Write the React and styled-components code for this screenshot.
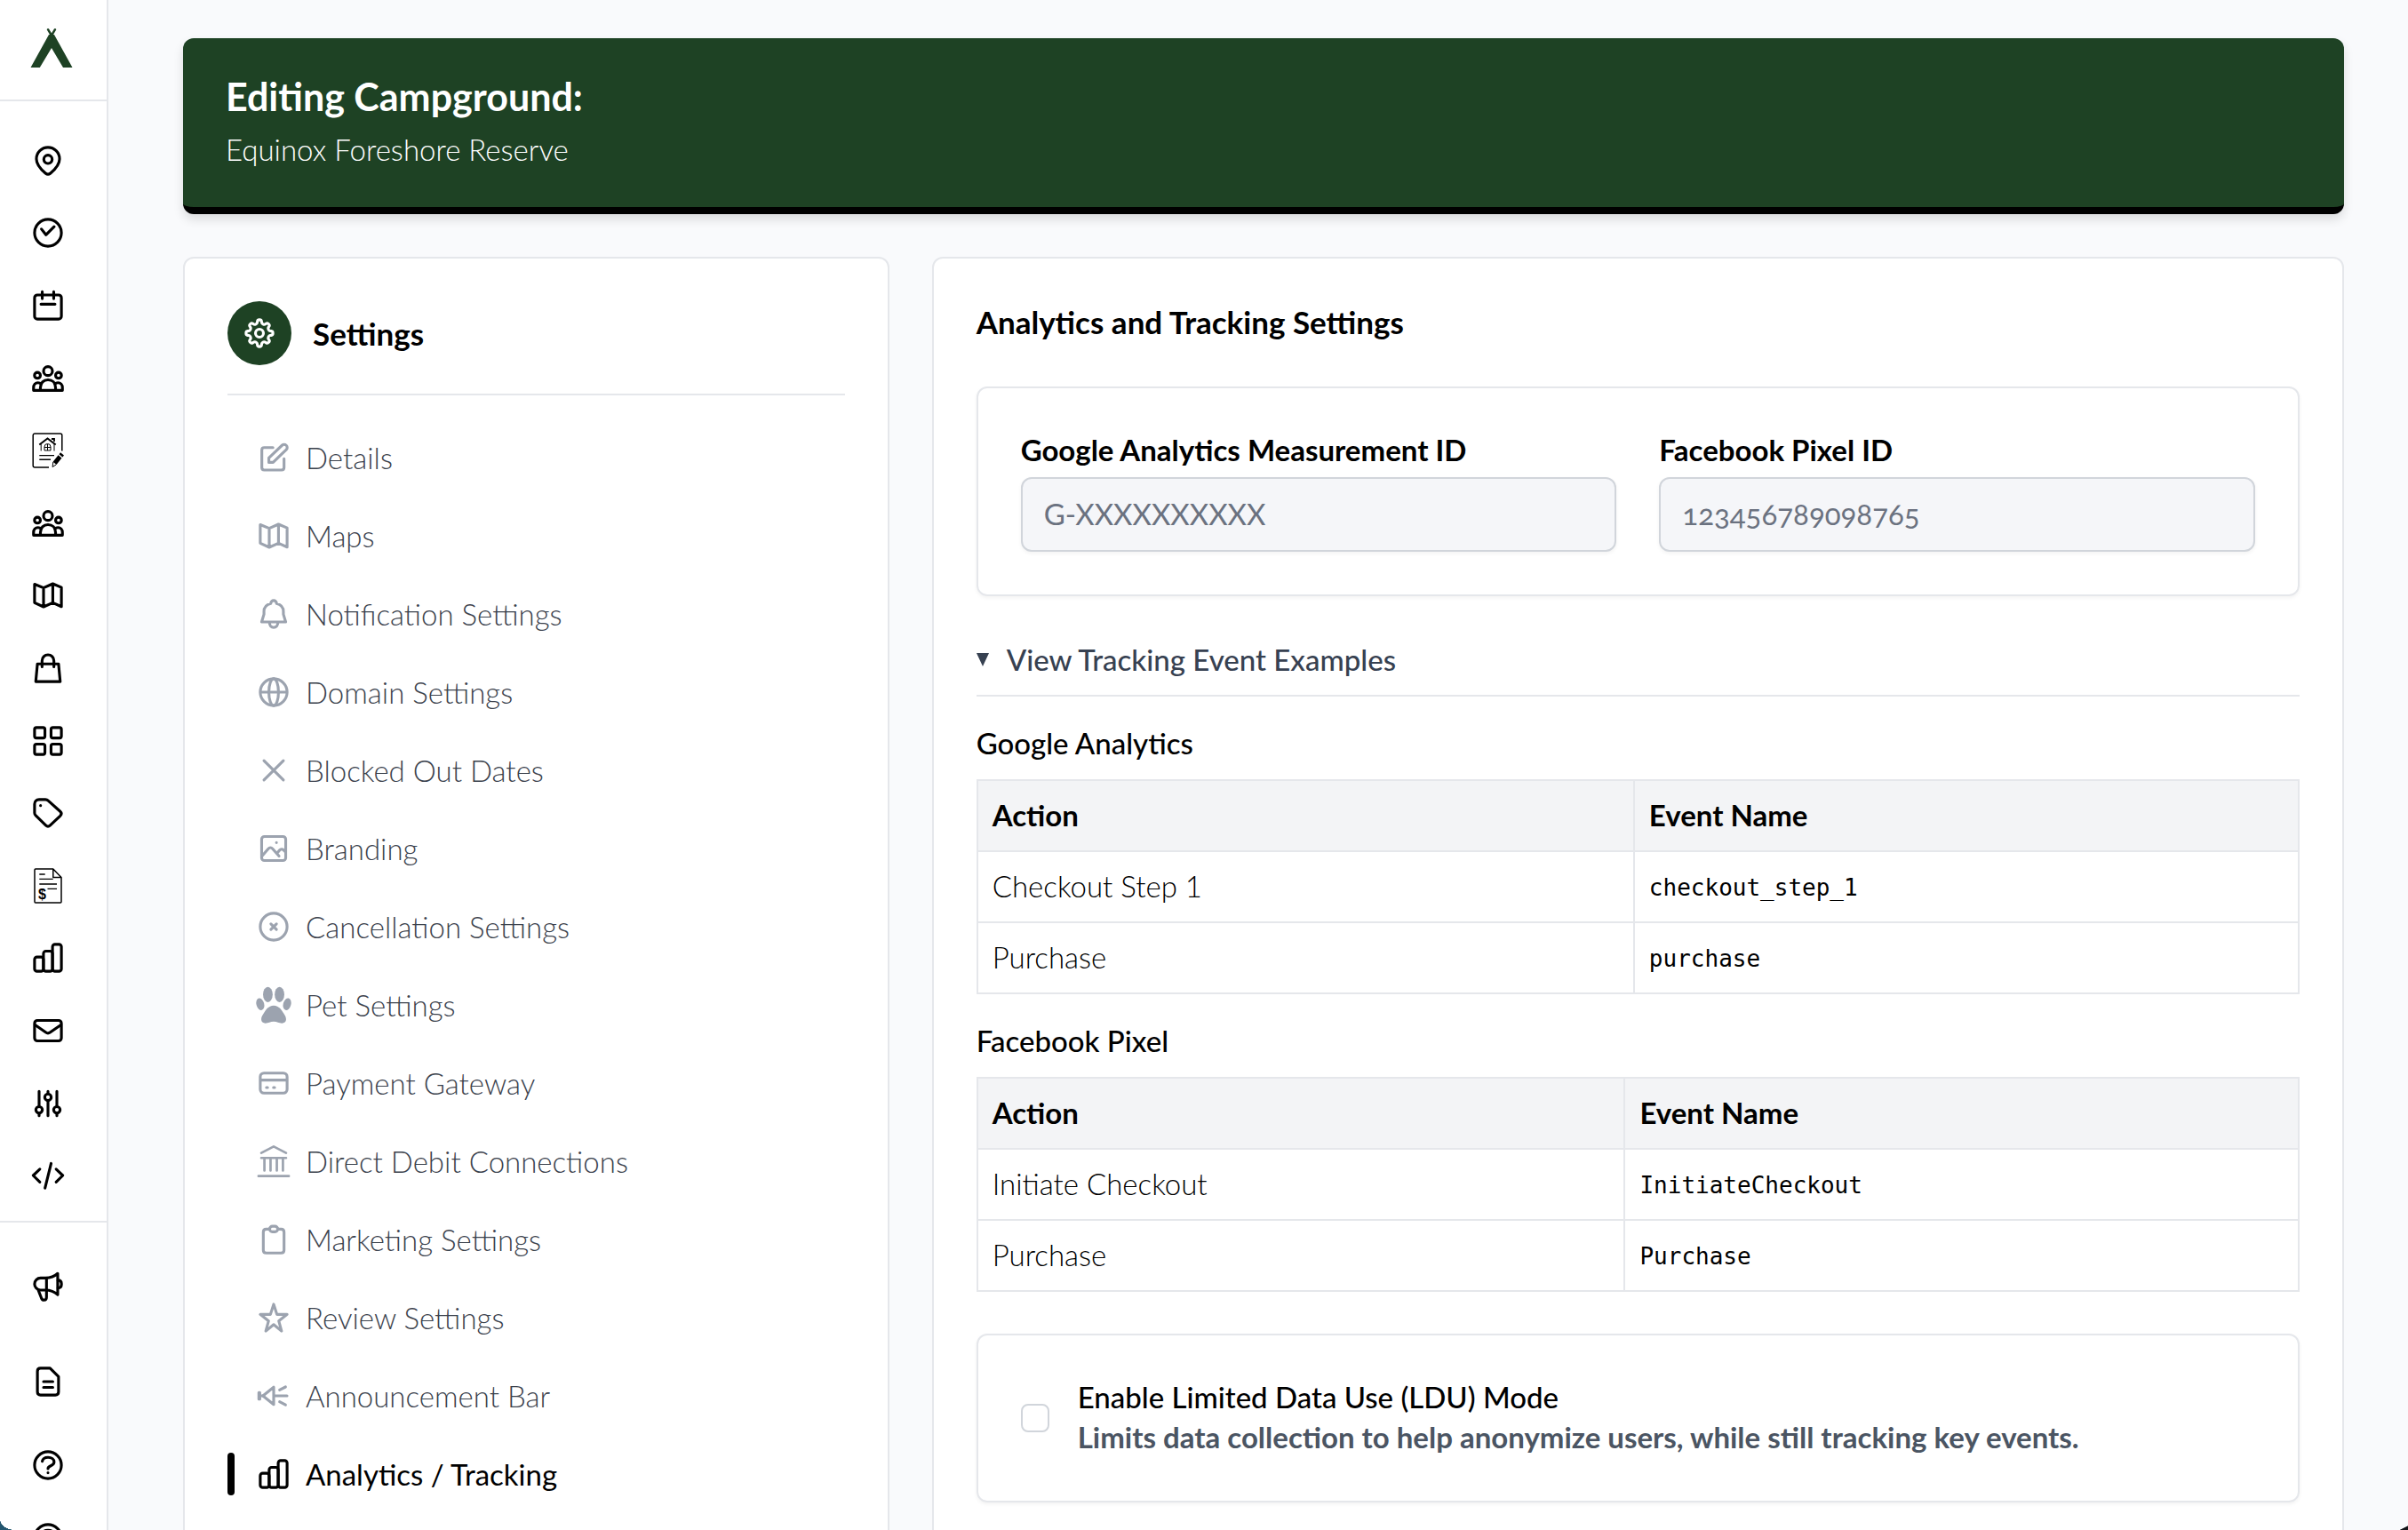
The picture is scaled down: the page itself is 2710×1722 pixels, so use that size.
import styled, { createGlobalStyle } from "styled-components";

// every icon is drawn on the same 24 unit grid with a 1.5 stroke
const icons = {
  pin: (
    <>
      <path d="M18.25 11c0 3-2.9 6-4.9 7.7-.8.7-1.9.7-2.7 0C8.65 17 5.75 14 5.75 11a6.25 6.25 0 0112.5 0z" />
      <circle cx="12" cy="11.2" r="2.25" />
    </>
  ),
  check: (
    <>
      <circle cx="12" cy="12" r="7.25" />
      <path d="M8.5 10l2.4 3.1 4.4-4.4" />
    </>
  ),
  calendar: (
    <>
      <rect x="4.75" y="6.25" width="14.5" height="13" rx="1.5" />
      <path d="M8.9 4.5v3.7M15.1 4.5v3.7M8.2 11.2h7.6" />
    </>
  ),
  people: (
    <>
      <circle cx="12" cy="8" r="2.4" />
      <circle cx="6.3" cy="10.3" r="1.6" />
      <circle cx="17.7" cy="10.3" r="1.6" />
      <path d="M7.9 18.4V17c0-2.6 1.7-4.3 4.1-4.3s4.1 1.7 4.1 4.3v1.4z" />
      <path d="M7.9 18.4H4.2V17c0-1.6 1-2.7 2.4-2.7.7 0 1.3.2 1.7.6M16.1 18.4h3.7V17c0-1.6-1-2.7-2.4-2.7-.7 0-1.3.2-1.7.6" />
    </>
  ),
  map: (
    <path d="M4.75 6L9.6 8l5-2.25 4.65 2V18.1L14.6 16l-5 2.25L4.75 16zM9.6 8v10M14.6 6v10" />
  ),
  bag: (
    <>
      <path d="M6.3 9.7h11.4l.9 9.55H5.4z" />
      <path d="M8.8 11.3V8a3.2 3.2 0 016.4 0v3.3" />
    </>
  ),
  grid: (
    <>
      <rect x="4.75" y="4.75" width="5.6" height="5.6" rx="1" />
      <rect x="13.65" y="4.75" width="5.6" height="5.6" rx="1" />
      <rect x="4.75" y="13.65" width="5.6" height="5.6" rx="1" />
      <rect x="13.65" y="13.65" width="5.6" height="5.6" rx="1" />
    </>
  ),
  tag: (
    <>
      <path d="M4.75 7.2c0-1.5 1-2.45 2.45-2.45h3.4c.6 0 1.1.2 1.5.6l6.5 5.8c.8.7.8 1.5.1 2.3l-5.5 5.2c-.8.8-1.6.8-2.4 0l-5.4-5.3c-.4-.4-.65-.9-.65-1.4z" />
      <path d="M8 8v.01" />
    </>
  ),
  chart: (
    <>
      <rect x="4.75" y="11.6" width="4.8" height="7.65" rx="1.3" />
      <rect x="9.55" y="8.4" width="4.9" height="10.85" rx="1.3" />
      <rect x="14.45" y="4.75" width="4.8" height="14.5" rx="1.3" />
    </>
  ),
  mail: (
    <>
      <rect x="4.75" y="6.5" width="14.5" height="11" rx="1.5" />
      <path d="M5 8.9l5.9 4.1c.7.5 1.5.5 2.2 0L19 8.9" />
    </>
  ),
  sliders: (
    <>
      <path d="M7.2 5.4v8.2M7.2 17.3v1.3M12 5.4v1.3M12 10.5v8.1M16.8 5.4v8.2M16.8 17.3v1.3" />
      <circle cx="7.2" cy="15.4" r="1.75" />
      <circle cx="12" cy="8.6" r="1.75" />
      <circle cx="16.8" cy="15.4" r="1.75" />
    </>
  ),
  code: <path d="M7.6 8.6L4 12l3.6 3.5M16.4 8.6L20 12l-3.6 3.5M13.7 5.5l-3.3 13.3" />,
  megaphone: (
    <>
      <path d="M17.25 4.9C15.6 6.5 13.2 7.4 10.6 7.4H8a3.25 3.25 0 000 6.5h2.6c2.6 0 5 .9 6.65 2.5z" />
      <path d="M11.2 7.5v10.3c0 .9-.5 1.5-1.3 1.5s-1.3-.5-1.5-1.2l-1.6-4.1" />
      <path d="M17.4 8.6c1.2 0 1.9.9 1.9 2.1s-.7 2.1-1.9 2.1" />
    </>
  ),
  doc: (
    <path d="M8 19.25h8c1 0 1.7-.7 1.7-1.7V9.3l-4.6-4.55H8c-1 0-1.7.7-1.7 1.7v11.1c0 1 .7 1.7 1.7 1.7zM9.6 12h5M9.6 15.1h5" />
  ),
  help: (
    <>
      <circle cx="12" cy="12" r="7.25" />
      <path d="M8.9 9.9c.3-1.4 1.5-2.1 3.1-2.1 2 0 3.3 1 3.3 2.5 0 2.4-3.3 1.7-3.3 3.6M12 16.1v.01" />
    </>
  ),
  edit: (
    <>
      <path d="M11.6 6.6H6.9c-.8 0-1.3.5-1.3 1.3v9.5c0 .8.5 1.3 1.3 1.3h9.4c.8 0 1.3-.5 1.3-1.3v-4.8" />
      <path d="M9.4 14.6v-2.4l7.1-6.8a1.65 1.65 0 012.3 0 1.6 1.6 0 010 2.3l-7.1 6.9z" />
    </>
  ),
  bell: (
    <>
      <path d="M17.25 12.2v-1.4c0-2.3-1.5-3.9-3.7-4.4 0-1-.7-1.65-1.55-1.65s-1.55.65-1.55 1.65c-2.2.5-3.7 2.1-3.7 4.4v1.4L5.5 16.3h13z" />
      <path d="M9.75 16.7c0 1.5.9 2.6 2.25 2.6s2.25-1.1 2.25-2.6" />
    </>
  ),
  globe: (
    <>
      <circle cx="12" cy="12" r="7.25" />
      <ellipse cx="12" cy="12" rx="2.6" ry="7.25" />
      <path d="M5 12h14" />
    </>
  ),
  cross: <path d="M17.25 6.75l-10.5 10.5M6.75 6.75l10.5 10.5" />,
  image: (
    <>
      <rect x="5.5" y="5.5" width="13" height="13" rx="1.5" />
      <path d="M5.7 16.1l3.4-4c.7-.8 1.6-.8 2.3 0l3.5 4M13.7 14.6l1.5-1.7c.6-.7 1.5-.7 2.1-.1l1.1 1.1M13.5 8.8v.01" />
    </>
  ),
  cancel: (
    <>
      <circle cx="12" cy="12" r="7.25" />
      <path d="M13.5 10.5l-3 3M10.5 10.5l3 3" />
    </>
  ),
  paw: (
    <g fill="currentColor" stroke="none">
      <ellipse cx="8.85" cy="6.4" rx="2.6" ry="4.1" />
      <ellipse cx="15.15" cy="6.4" rx="2.6" ry="4.1" />
      <ellipse cx="4.75" cy="11.6" rx="2.1" ry="3.3" transform="rotate(-15 4.75 11.6)" />
      <ellipse cx="19.25" cy="11.6" rx="2.1" ry="3.3" transform="rotate(15 19.25 11.6)" />
      <path d="M12 12.3c2.9 0 4.4 2.6 5.4 4.2.9 1.3 1.3 2.2 1.3 3.3 0 1.4-1 2.1-2.3 2.1-1.5 0-2.6-.9-4.4-.9s-2.9.9-4.4.9c-1.3 0-2.3-.7-2.3-2.1 0-1.1.4-2 1.3-3.3 1-1.6 2.5-4.2 5.4-4.2z" />
    </g>
  ),
  card: (
    <>
      <rect x="4.75" y="6.6" width="14.5" height="10.8" rx="2" />
      <path d="M5 10.4h14M8.1 14.4h.6M11.9 14.4h.6" />
    </>
  ),
  bank: (
    <path
      strokeWidth="1.3"
      d="M5.3 7.5L12 4l6.7 3.5M5.3 10.2h13.4M7 10.3V17M10.3 10.3V17M13.7 10.3V17M17 10.3V17M3.8 20h16.4"
    />
  ),
  clipboard: (
    <>
      <path d="M9.8 6.4H8c-1 0-1.6.6-1.6 1.6v9.7c0 1 .6 1.6 1.6 1.6h8c1 0 1.6-.6 1.6-1.6V8c0-1-.6-1.6-1.6-1.6h-1.8" />
      <rect x="9.8" y="4.85" width="4.4" height="3" rx="1.5" />
    </>
  ),
  star: (
    <path d="M12 4.75L13.75 10.25H19.25L14.75 13.75L16.25 19.25L12 15.75L7.75 19.25L9.25 13.75L4.75 10.25H10.25L12 4.75Z" />
  ),
  horn: (
    <>
      <path d="M12 7.3v9.4L6.2 12zM12 12h7.2M15.2 8.8l3.2-1.6M15.2 15.2l3.2 1.7" />
      <path fill="currentColor" d="M4 10.2h.5v3.6H4zM4 12h2" />
    </>
  ),
  cog: (
    <>
      <path d="M13.119 5.613C13.051 5.119 12.628 4.75 12.129 4.75H11.872C11.372 4.75 10.949 5.119 10.881 5.613L10.794 6.245C10.738 6.648 10.44 6.969 10.062 7.119L9.895 7.189C9.522 7.352 9.084 7.338 8.759 7.094L8.451 6.864C8.053 6.565 7.496 6.605 7.144 6.956L6.956 7.144C6.605 7.496 6.565 8.053 6.864 8.451L7.094 8.759C7.338 9.084 7.352 9.522 7.189 9.895L7.119 10.062C6.969 10.44 6.648 10.738 6.245 10.794L5.613 10.881C5.119 10.949 4.75 11.372 4.75 11.872V12.129C4.75 12.628 5.119 13.051 5.613 13.119L6.245 13.206C6.648 13.262 6.969 13.56 7.119 13.938L7.189 14.105C7.352 14.478 7.338 14.916 7.094 15.241L6.864 15.549C6.565 15.947 6.605 16.504 6.956 16.856L7.144 17.044C7.496 17.396 8.053 17.435 8.451 17.137L8.759 16.906C9.084 16.662 9.522 16.648 9.895 16.811L10.062 16.881C10.44 17.031 10.738 17.352 10.794 17.755L10.881 18.387C10.949 18.881 11.372 19.25 11.872 19.25H12.129C12.628 19.25 13.051 18.881 13.119 18.387L13.206 17.755C13.262 17.352 13.56 17.031 13.938 16.881L14.105 16.811C14.478 16.648 14.916 16.662 15.241 16.906L15.549 17.137C15.947 17.435 16.504 17.396 16.856 17.044L17.044 16.856C17.396 16.504 17.435 15.947 17.137 15.549L16.906 15.241C16.662 14.916 16.648 14.478 16.811 14.105L16.881 13.938C17.031 13.56 17.352 13.262 17.755 13.206L18.387 13.119C18.881 13.051 19.25 12.628 19.25 12.129V11.872C19.25 11.372 18.881 10.949 18.387 10.881L17.755 10.794C17.352 10.738 17.031 10.44 16.881 10.062L16.811 9.895C16.648 9.522 16.662 9.084 16.906 8.759L17.137 8.451C17.435 8.053 17.396 7.496 17.044 7.144L16.856 6.956C16.504 6.605 15.947 6.565 15.549 6.864L15.241 7.094C14.916 7.338 14.478 7.352 14.105 7.189L13.938 7.119C13.56 6.969 13.262 6.648 13.206 6.245Z" />
      <circle cx="12" cy="12" r="2.15" />
    </>
  ),
};

const Icon = ({ name }) => (
  <StyledIcon viewBox="0 0 24 24" aria-hidden="true">
    {icons[name]}
  </StyledIcon>
);

const TentLogo = () => (
  <svg width="48" height="46" viewBox="0 0 48 46" aria-hidden="true">
    <path fill="#1e4224" d="M.5 45L21 8h6l20.5 37H37L24 23 10.8 45z" />
    <path stroke="#1e4224" strokeWidth="2.5" strokeLinecap="round" d="M20 2.2l5 8.3M28 2.2l-5 8.3" />
  </svg>
);

const ContractIcon = () => (
  <svg width="36" height="40" viewBox="0 0 36 40" fill="none" stroke="currentColor" aria-hidden="true">
    <path strokeWidth="1.5" d="M33.8 20.5V3a2 2 0 00-2-2H3.2a2 2 0 00-2 2v34a2 2 0 002 2H19" />
    <path strokeWidth="2" d="M8.3 13.5l9.2-7 9.2 7" />
    <path strokeWidth="1" d="M10.2 13v7.5M25 13v7.5" />
    <path strokeWidth="1.8" d="M22 7h3v3" />
    <path strokeWidth="1" d="M14 20v-4a3.5 3.5 0 017 0v4zM17.5 13v7M14 16.5h7" />
    <path strokeWidth="1.4" d="M8.3 25.6H25M8.3 30.3H21" />
    <path fill="currentColor" stroke="none" d="M30.5 24.2l1.6-1.9 3.9 3.2-1.6 1.9zM29.6 25.2l3.9 3.2-6 7.5-3.9-3.2z" />
    <path strokeWidth="1" d="M23.8 33l-.7 5.5 4-2.5" />
  </svg>
);

const InvoiceIcon = () => (
  <svg width="32" height="40" viewBox="0 0 32 40" fill="none" stroke="currentColor" aria-hidden="true">
    <path strokeWidth="1.5" strokeLinejoin="round" d="M21.8 1H2a1 1 0 00-1 1v36a1 1 0 001 1h28a1 1 0 001-1V10.5zM21.8 1v9.5H31" />
    <path strokeWidth="1.3" d="M6.3 7h6.4M6.3 12.4h15.4M6.3 18H26M15.5 23.4H26" />
    <text x="5" y="35" fill="currentColor" stroke="none" fontFamily="Liberation Sans, sans-serif" fontSize="16" fontWeight="700">
      $
    </text>
  </svg>
);

const mainLinks = [
  { title: "Campgrounds", icon: "pin" },
  { title: "Check in", icon: "check" },
  { title: "Calendar", icon: "calendar" },
  { title: "Guests", icon: "people" },
  { title: "Contracts", custom: ContractIcon },
  { title: "Staff", icon: "people" },
  { title: "Site map", icon: "map" },
  { title: "Store", icon: "bag" },
  { title: "Extras", icon: "grid" },
  { title: "Discounts", icon: "tag" },
  { title: "Invoices", custom: InvoiceIcon },
  { title: "Reports", icon: "chart" },
  { title: "Messages", icon: "mail" },
  { title: "Controls", icon: "sliders" },
  { title: "Embed", icon: "code" },
];

const menu = [
  { title: "Details", icon: "edit" },
  { title: "Maps", icon: "map" },
  { title: "Notification Settings", icon: "bell" },
  { title: "Domain Settings", icon: "globe" },
  { title: "Blocked Out Dates", icon: "cross" },
  { title: "Branding", icon: "image" },
  { title: "Cancellation Settings", icon: "cancel" },
  { title: "Pet Settings", icon: "paw" },
  { title: "Payment Gateway", icon: "card" },
  { title: "Direct Debit Connections", icon: "bank" },
  { title: "Marketing Settings", icon: "clipboard" },
  { title: "Review Settings", icon: "star" },
  { title: "Announcement Bar", icon: "horn" },
  { title: "Analytics / Tracking", icon: "chart", active: true },
];

const googleEvents = [
  ["Checkout Step 1", "checkout_step_1"],
  ["Purchase", "purchase"],
];

const facebookEvents = [
  ["Initiate Checkout", "InitiateCheckout"],
  ["Purchase", "Purchase"],
];

const Events = ({ title, rows, split }) => (
  <>
    <TableTitle>{title}</TableTitle>
    <EventTable $split={split}>
      <thead>
        <tr>
          <th>Action</th>
          <th>Event Name</th>
        </tr>
      </thead>
      <tbody>
        {rows.map(([action, name]) => (
          <tr key={name}>
            <td>{action}</td>
            <td>
              <code>{name}</code>
            </td>
          </tr>
        ))}
      </tbody>
    </EventTable>
  </>
);

const App = () => {
  return (
    <Page>
      <GlobalStyle />
      <SideBar>
        <Brand href="#home" aria-label="Home">
          <TentLogo />
        </Brand>
        <MainNav>
          {mainLinks.map((link) => (
            <NavLink href="#" key={link.title} aria-label={link.title}>
              {link.custom ? <link.custom /> : <Icon name={link.icon} />}
            </NavLink>
          ))}
        </MainNav>
        <FootNav>
          <FootLink href="#" aria-label="News" $gap={57}>
            <Icon name="megaphone" />
          </FootLink>
          <FootLink href="#" aria-label="Docs" $gap={44}>
            <Icon name="doc" />
          </FootLink>
          <FootLink href="#" aria-label="Help" $gap={32}>
            <Icon name="help" />
          </FootLink>
          <FootLink href="#" aria-label="Support" $gap={0}>
            <Icon name="help" />
          </FootLink>
        </FootNav>
      </SideBar>

      <Main>
        <Banner>
          <h1>Editing Campground:</h1>
          <p>Equinox Foreshore Reserve</p>
        </Banner>

        <Columns>
          <Card>
            <MenuHead>
              <Badge>
                <Icon name="cog" />
              </Badge>
              <h2>Settings</h2>
            </MenuHead>
            <Menu>
              {menu.map((item) => (
                <MenuLink href="#" key={item.title} $active={item.active}>
                  <Icon name={item.icon} />
                  {item.title}
                </MenuLink>
              ))}
            </Menu>
          </Card>

          <Card>
            <PanelTitle>Analytics and Tracking Settings</PanelTitle>
            <FieldBox>
              <Field>
                <label htmlFor="ga">Google Analytics Measurement ID</label>
                <input id="ga" type="text" placeholder="G-XXXXXXXXXX" />
              </Field>
              <Field>
                <label htmlFor="fb">Facebook Pixel ID</label>
                <input id="fb" type="text" placeholder="123456789098765" />
              </Field>
            </FieldBox>

            <Examples open>
              <summary>View Tracking Event Examples</summary>
              <Events title="Google Analytics" rows={googleEvents} split="49.7%" />
              <Events title="Facebook Pixel" rows={facebookEvents} split="49%" />
            </Examples>

            <ModeBox>
              <input id="ldu" type="checkbox" />
              <label htmlFor="ldu">
                Enable Limited Data Use (LDU) Mode
                <span>Limits data collection to help anonymize users, while still tracking key events.</span>
              </label>
            </ModeBox>
          </Card>
        </Columns>
      </Main>
      <LeftCorner />
      <RightCorner />
    </Page>
  );
};

const GlobalStyle = createGlobalStyle`
  * {
    box-sizing: border-box;
  }

  body {
    margin: 0;
    background: #f9fafc;
    color: #000;
    font-family: Lato, "Open Sans", sans-serif;
    font-size: 33px;
    line-height: 46px;
  }

  h1, h2, h3, p {
    margin: 0;
  }

  a {
    color: inherit;
    text-decoration: none;
  }
`;

const Page = styled.div`
  display: flex;
  height: 100vh;
  overflow: hidden;
`;

const StyledIcon = styled.svg`
  flex: none;
  width: 50px;
  height: 50px;
  fill: none;
  stroke: currentColor;
  stroke-width: 1.5;
  stroke-linecap: round;
  stroke-linejoin: round;
`;

const SideBar = styled.aside`
  display: flex;
  flex-direction: column;
  flex: none;
  width: 122px;
  background: #fff;
  border-right: 2px solid #e5e7eb;
`;

const Brand = styled.a`
  display: flex;
  flex: none;
  align-items: center;
  height: 114px;
  padding: 0 0 4px 34px;
  border-bottom: 2px solid #e5e7eb;
`;

const MainNav = styled.nav`
  display: flex;
  flex-direction: column;
  flex: 1;
  padding: 26px 12px 10px 0;
`;

const NavLink = styled.a`
  display: flex;
  flex: 1;
  align-items: center;
  justify-content: center;
`;

const FootNav = styled.nav`
  flex: none;
  height: 348px;
  padding: 47px 12px 0 0;
  overflow: hidden;
  border-top: 2px solid #e5e7eb;
`;

const FootLink = styled.a`
  display: flex;
  justify-content: center;
  margin-bottom: ${(props) => props.$gap}px;
`;

const Main = styled.main`
  flex: 1;
  min-width: 0;
  padding: 43px 72px 0 84px;
`;

const Banner = styled.header`
  padding: 42px 48px;
  background: #1e4224;
  border-bottom: 8px solid #000;
  border-radius: 12px;
  box-shadow: 0 6px 12px rgba(0, 0, 0, 0.12);
  color: #fff;

  h1 {
    margin-bottom: 12px;
    font-size: 43px;
    line-height: 48px;
  }

  p {
    font-weight: 300;
  }
`;

const Columns = styled.div`
  display: grid;
  grid-template-columns: 1fr 2fr;
  gap: 48px;
  margin-top: 48px;
`;

const Card = styled.section`
  min-width: 0;
  padding: 48px 48px 96px;
  background: #fff;
  border: 2px solid #e5e7eb;
  border-radius: 12px;
`;

const MenuHead = styled.div`
  display: flex;
  align-items: center;
  gap: 24px;
  padding-bottom: 32px;
  border-bottom: 2px solid #e5e7eb;

  h2 {
    font-size: 35px;
    line-height: 44px;
  }
`;

const Badge = styled.span`
  display: flex;
  align-items: center;
  justify-content: center;
  width: 72px;
  height: 72px;
  background: #1e4224;
  border-radius: 50%;
  color: #fff;
`;

const Menu = styled.nav`
  padding-top: 26px;
`;

const MenuLink = styled.a`
  display: flex;
  align-items: center;
  gap: 11px;
  height: 88px;
  color: ${(props) => (props.$active ? "#000" : "#3b424d")};
  font-weight: ${(props) => (props.$active ? 400 : 300)};

  &::before {
    content: "";
    width: 8px;
    height: 48px;
    margin-right: 8px;
    border-radius: 4px;
    background: ${(props) => (props.$active ? "#000" : "transparent")};
  }

  svg {
    color: ${(props) => (props.$active ? "#000" : "#9ca3af")};
  }
`;

const PanelTitle = styled.h2`
  font-size: 35px;
`;

const FieldBox = styled.div`
  display: grid;
  grid-template-columns: 1fr 1fr;
  gap: 48px;
  margin-top: 50px;
  padding: 48px;
  border: 2px solid #e5e7eb;
  border-radius: 12px;
  box-shadow: 0 2px 4px rgba(0, 0, 0, 0.05);
`;

const Field = styled.div`
  label {
    display: block;
    margin-bottom: 10px;
    font-weight: 700;
    line-height: 42px;
  }

  input {
    display: block;
    width: 100%;
    height: 84px;
    padding: 0 24px 3px;
    background: #f5f6f9;
    border: 2px solid #d1d5db;
    border-radius: 12px;
    box-shadow: 0 2px 4px rgba(0, 0, 0, 0.05);
    font-family: inherit;
    font-size: 33px;
    font-variant-numeric: oldstyle-nums;
  }

  input::placeholder {
    color: #6b7280;
  }
`;

const Examples = styled.details`
  margin-top: 48px;

  summary {
    display: flex;
    align-items: center;
    gap: 20px;
    padding-bottom: 17px;
    border-bottom: 2px solid #e5e7eb;
    color: #374151;
    font-weight: 500;
    list-style: none;
  }

  summary::before {
    content: "";
    border: solid transparent;
    border-width: 15px 7px 0;
    border-top-color: #374151;
  }
`;

const TableTitle = styled.h3`
  margin: 29px 0 18px;
  font-size: 33px;
  font-weight: 500;
`;

const EventTable = styled.table`
  width: 100%;
  border-collapse: collapse;

  th,
  td {
    height: 80px;
    padding: 0 16px 3px;
    border: 2px solid #e5e7eb;
    font-weight: 300;
    text-align: left;
  }

  th {
    background: #f3f4f6;
    font-weight: 700;
  }

  th:first-child {
    width: ${(props) => props.$split};
  }

  code {
    font-family: "DejaVu Sans Mono", monospace;
    font-size: 26px;
  }
`;

const ModeBox = styled.div`
  display: flex;
  align-items: center;
  gap: 32px;
  margin-top: 47px;
  padding: 47px 48px;
  border: 2px solid #e5e7eb;
  border-radius: 12px;
  box-shadow: 0 2px 4px rgba(0, 0, 0, 0.05);

  input {
    appearance: none;
    flex: none;
    width: 32px;
    height: 32px;
    margin: 0;
    background: #fff;
    border: 2px solid #d1d5db;
    border-radius: 8px;
  }

  label {
    padding-bottom: 2px;
    font-weight: 500;
    line-height: 45px;
  }

  span {
    display: block;
    color: #4b5563;
    font-weight: 700;
  }
`;

const LeftCorner = styled.div`
  position: fixed;
  left: 0;
  bottom: 0;
  width: 17px;
  height: 12px;
  background: radial-gradient(ellipse farthest-side at top right, transparent 98%, #24566f 100%);
`;

const RightCorner = styled.div`
  position: fixed;
  right: 0;
  bottom: 0;
  width: 10px;
  height: 5px;
  background: linear-gradient(to bottom right, transparent 50%, #14161a 55%);
`;

export default App;
